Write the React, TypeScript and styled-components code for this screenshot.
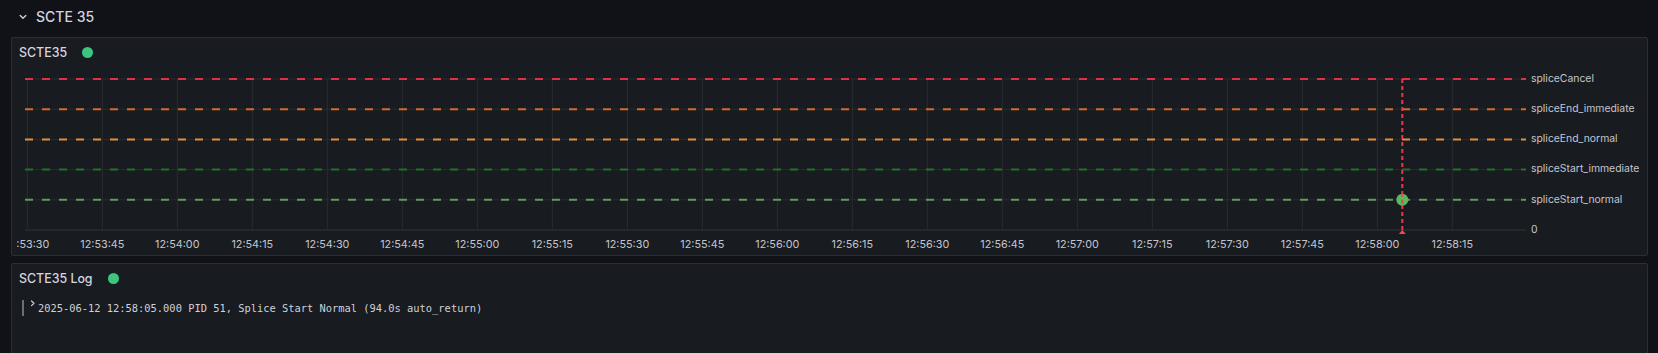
import styled, { createGlobalStyle } from "styled-components"

const GlobalStyle = createGlobalStyle`
  body {
    margin: 0;
    background: #111217;
    font-family: Inter, "Noto Sans", sans-serif;
    color: #ccccdc;
  }
`

interface Threshold {
  name: string
  value: number
  color: string
}

const thresholds: Threshold[] = [
  { name: "spliceCancel", value: 5, color: "#dc3249" },
  { name: "spliceEnd_immediate", value: 4, color: "#d9672e" },
  { name: "spliceEnd_normal", value: 3, color: "#e38e3a" },
  { name: "spliceStart_immediate", value: 2, color: "#22702f" },
  { name: "spliceStart_normal", value: 1, color: "#5f9c58" },
]

const ticks = [
  "12:53:30", "12:53:45", "12:54:00", "12:54:15", "12:54:30", "12:54:45",
  "12:55:00", "12:55:15", "12:55:30", "12:55:45", "12:56:00", "12:56:15",
  "12:56:30", "12:56:45", "12:57:00", "12:57:15", "12:57:30", "12:57:45",
  "12:58:00", "12:58:15",
]

// chart geometry, in svg units
const plotLeft = 8
const plotRight = 1509
const zeroY = 164
const step = 30.2
const tickX0 = 10.3
const tickGap = 75
const eventX = tickX0 + (18 + 5 / 15) * tickGap

const yOf = (v: number) => zeroY - v * step

const Chart = () => (
  <ChartSvg width={1625} height={189}>
    {[0, 1, 2, 3, 4, 5].map((v) => (
      <line key={v} x1={plotLeft} x2={plotRight} y1={yOf(v)} y2={yOf(v)} stroke={v === 0 ? "#33353b" : "#2a2c31"} strokeWidth={1} />
    ))}
    {ticks.map((t, i) => {
      const x = tickX0 + i * tickGap
      return (
        <g key={t}>
          <line x1={x} x2={x} y1={yOf(5)} y2={zeroY} stroke="#2a2c31" strokeWidth={1} />
          <TickText x={x} y={179} textAnchor="middle" dominantBaseline="middle">{t}</TickText>
        </g>
      )
    })}
    {thresholds.map((th) => (
      <g key={th.name}>
        <line x1={plotLeft} x2={plotRight} y1={yOf(th.value)} y2={yOf(th.value)} stroke={th.color} strokeWidth={2} strokeDasharray="8 9" />
        <LevelText x={1514} y={yOf(th.value)} dominantBaseline="middle">{th.name}</LevelText>
      </g>
    ))}
    <LevelText x={1514} y={zeroY} dominantBaseline="middle">0</LevelText>
    <line x1={eventX} x2={eventX} y1={yOf(5)} y2={zeroY} stroke="#e8384f" strokeWidth={2} strokeDasharray="4 3" />
    <polygon points={`${eventX - 3.5},${zeroY + 4} ${eventX + 3.5},${zeroY + 4} ${eventX},${zeroY}`} fill="#f2495c" />
    <circle cx={eventX} cy={yOf(1)} r={6} fill="#5cb85c" />
    <line x1={eventX} x2={eventX} y1={yOf(1) - 6} y2={yOf(1) + 6} stroke="#e8384f" strokeWidth={2} strokeDasharray="4 3" strokeDashoffset={1} opacity={0.8} />
  </ChartSvg>
)

const App = () => {
  return (
    <Page>
      <GlobalStyle />
      <RowHeader>
        <svg width="8" height="6" viewBox="0 0 8 6">
          <path d="M1.2 1.5 L4 4.2 L6.8 1.5" fill="none" stroke="#ccccdc" strokeWidth="1.4" strokeLinecap="round" strokeLinejoin="round" />
        </svg>
        <RowTitle>SCTE 35</RowTitle>
      </RowHeader>
      <Panel height={219}>
        <PanelHeader>
          <PanelTitle>SCTE35</PanelTitle>
          <StatusDot />
        </PanelHeader>
        <Chart />
      </Panel>
      <Panel height={100} gap={7}>
        <PanelHeader>
          <PanelTitle>SCTE35 Log</PanelTitle>
          <StatusDot />
        </PanelHeader>
        <LogBody>
          <LogRow>
            <LevelBar />
            <svg width="6" height="8" viewBox="0 0 6 8">
              <path d="M1.5 1 L4 3.3 L1.5 5.6" fill="none" stroke="#ccccdc" strokeWidth="1.2" strokeLinecap="round" strokeLinejoin="round" />
            </svg>
            <LogText>2025-06-12 12:58:05.000 PID 51, Splice Start Normal (94.0s auto_return)</LogText>
          </LogRow>
        </LogBody>
      </Panel>
    </Page>
  )
}

export default App

const Page = styled.div`
  padding: 0 10px 0 11px;
  height: 353px;
  overflow: hidden;
`

const RowHeader = styled.div`
  height: 33px;
  display: flex;
  align-items: center;
  gap: 9px;
  padding-left: 8px;
  margin-bottom: 4px;
`

const RowTitle = styled.span`
  font-size: 14px;
  font-weight: 500;
  color: #d4d4e0;
`

interface PanelProps {
  height: number
  gap?: number
}

const Panel = styled.div<PanelProps>`
  box-sizing: border-box;
  height: ${(p) => p.height}px;
  margin-top: ${(p) => p.gap ?? 0}px;
  background: #181b1f;
  border: 1px solid #2c2e33;
  border-radius: 2px;
  overflow: hidden;
`

const PanelHeader = styled.div`
  height: 28px;
  display: flex;
  align-items: center;
  padding-left: 7px;
`

const PanelTitle = styled.span`
  font-size: 12.4px;
  font-weight: 500;
  color: #d4d4e0;
`

const StatusDot = styled.span`
  width: 11px;
  height: 11px;
  border-radius: 50%;
  background: #3fc47f;
  margin-left: 15px;
`

const ChartSvg = styled.svg`
  display: block;
  margin-left: 5px;
`

const TickText = styled.text`
  font-family: Inter, "Noto Sans", sans-serif;
  font-size: 10.8px;
  fill: #c4c5cf;
`

const LevelText = styled.text`
  font-family: Inter, "Noto Sans", sans-serif;
  font-size: 10.4px;
  fill: #c4c5cf;
`

const LogBody = styled.div`
  padding: 8px 0 0 10px;
`

const LogRow = styled.div`
  display: flex;
  align-items: flex-start;
  height: 16px;
`

const LevelBar = styled.span`
  width: 2px;
  height: 16px;
  background: #6c6e76;
  margin-right: 6px;
`

const LogText = styled.span`
  font-family: "DejaVu Sans Mono", "Liberation Mono", monospace;
  font-size: 10.4px;
  line-height: 16px;
  color: #d0d1db;
  margin-left: 2px;
`
